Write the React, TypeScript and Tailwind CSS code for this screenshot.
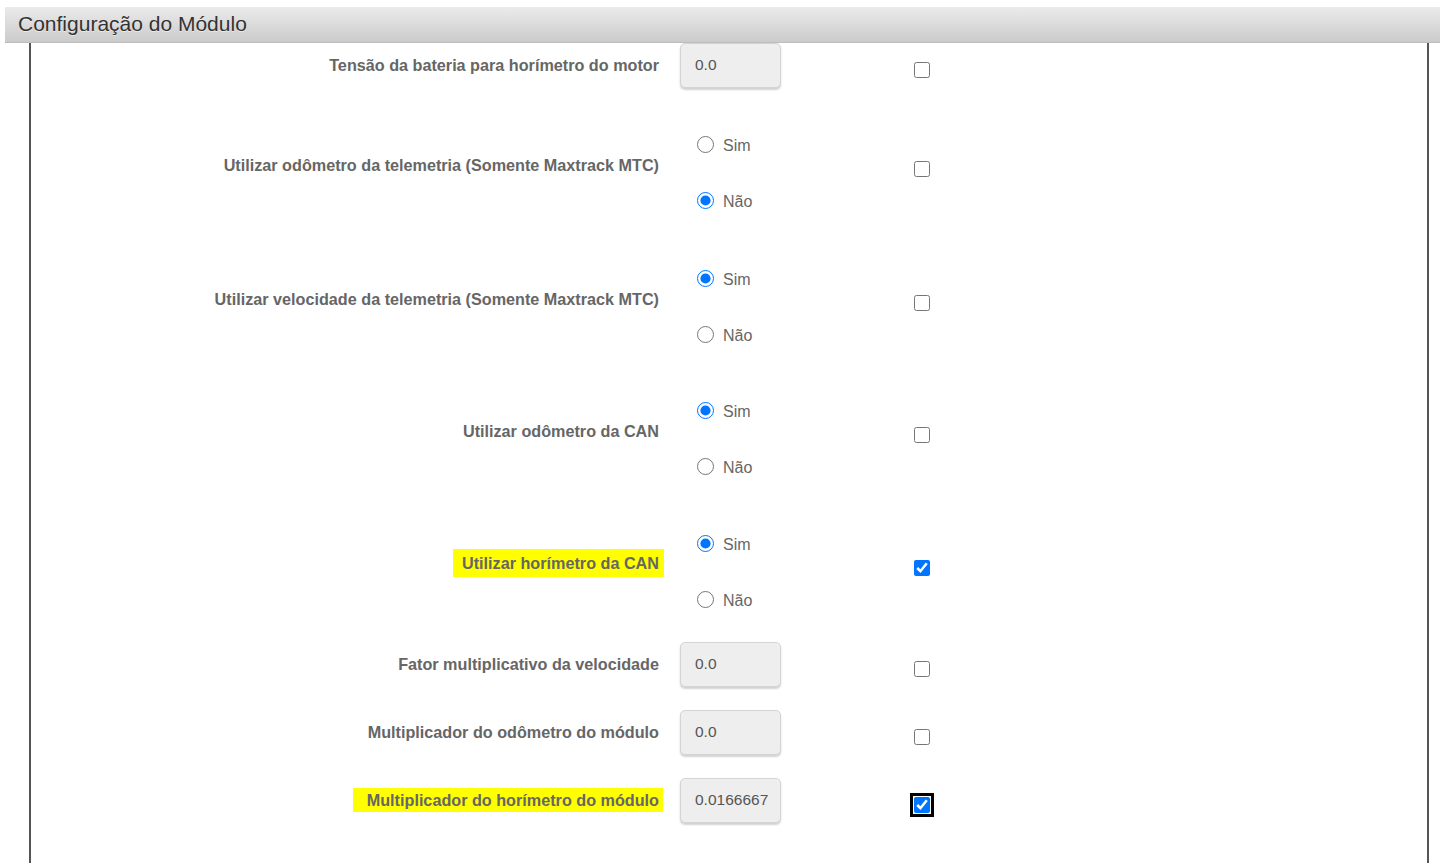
import React from "react";

const labelCls =
  "text-[16.2px] font-bold text-[#666] leading-[20px] whitespace-nowrap";

function Label({ text, hlCls, cls }: { text: string; hlCls?: string; cls?: string }) {
  return (
    <div className={`w-[628px] flex justify-end ${cls ?? ""}`}>
      {hlCls ? (
        <span className={`${labelCls} bg-[#ffff00] text-[#5a5a1a] ${hlCls}`}>{text}</span>
      ) : (
        <span className={labelCls}>{text}</span>
      )}
    </div>
  );
}

function Check({ checked, focus, cls }: { checked?: boolean; focus?: boolean; cls?: string }) {
  return (
    <input
      type="checkbox"
      defaultChecked={checked}
      className={`w-4 h-4 m-0 accent-[#0075ff] ${focus ? "outline-[3px] outline-solid outline-black outline-offset-[1px] rounded-[2px]" : ""} ${cls ?? ""}`}
    />
  );
}

function InputRow({ label, value, hlCls, mt, checked, focus }: { label: string; value: string; hlCls?: string; mt: string; checked?: boolean; focus?: boolean }) {
  return (
    <div className={`flex items-center ${mt}`}>
      <Label text={label} hlCls={hlCls} cls="mb-[2px]" />
      <div className="w-[255px] pl-[21px]">
        <div className="w-[101px] h-[45px] rounded-[5px] bg-[#eeeeee] border border-[#d4d4d4] shadow-[0_2px_2px_rgba(0,0,0,0.18)] flex items-center px-[14px] pb-[2px] text-[15.5px] text-[#555]">
          {value}
        </div>
      </div>
      <Check checked={checked} focus={focus} cls="mt-[8px]" />
    </div>
  );
}

function Radio({ label, checked, name }: { label: string; checked?: boolean; name: string }) {
  return (
    <label className="flex items-center h-[28px] gap-[9px]">
      <input type="radio" name={name} defaultChecked={checked} className="w-[17px] h-[17px] m-0 accent-[#0075ff]" />
      <span className="text-[16px] text-[#666] mt-[4px]">{label}</span>
    </label>
  );
}

function RadioRow({ label, name, sim, hlCls, mt, checked }: { label: string; name: string; sim: boolean; hlCls?: string; mt: string; checked?: boolean }) {
  return (
    <div className={`flex items-center ${mt}`}>
      <Label text={label} hlCls={hlCls} cls={hlCls ? "mb-[16px]" : "mb-[14px]"} />
      <div className="w-[255px] pl-[38px] flex flex-col gap-[28px]">
        <Radio label="Sim" name={name} checked={sim} />
        <Radio label="Não" name={name} checked={!sim} />
      </div>
      <Check checked={checked} cls="mb-[6px]" />
    </div>
  );
}

export default function App() {
  return (
    <div className="w-[1440px] h-[863px] bg-white overflow-hidden font-['Liberation_Sans',Arial,sans-serif]">
      <div className="pt-[7px] pl-[5px]">
        <div className="h-[36px] bg-gradient-to-b from-[#ebebeb] to-[#cbcbcb] border-b border-[#bdbdbd] flex items-center pl-[13px]">
          <span className="text-[21px] text-[#333] mb-[2px] [text-shadow:0_1px_0_rgba(255,255,255,0.5)]">Configuração do Módulo</span>
        </div>
      </div>
      <div className="ml-[29px] w-[1400px] h-[820px] border-l-2 border-r-2 border-[#555]">
        <InputRow label="Tensão da bateria para horímetro do motor" value="0.0" mt="mt-0" />
        <RadioRow label="Utilizar odômetro da telemetria (Somente Maxtrack MTC)" name="r1" sim={false} mt="mt-[42px]" />
        <RadioRow label="Utilizar velocidade da telemetria (Somente Maxtrack MTC)" name="r2" sim={true} mt="mt-[50px]" />
        <RadioRow label="Utilizar odômetro da CAN" name="r3" sim={true} mt="mt-[48px]" />
        <RadioRow label="Utilizar horímetro da CAN" name="r4" sim={true} hlCls="pl-[9px] pr-[5px] py-[4px] -mr-[5px]" mt="mt-[49px]" checked />
        <InputRow label="Fator multiplicativo da velocidade" value="0.0" mt="mt-[29px]" />
        <InputRow label="Multiplicador do odômetro do módulo" value="0.0" mt="mt-[23px]" />
        <InputRow label="Multiplicador do horímetro do módulo" value="0.0166667" hlCls="pl-[14px] pr-[4px] py-[2px] -mr-[4px]" mt="mt-[23px]" checked focus />
      </div>
    </div>
  );
}
